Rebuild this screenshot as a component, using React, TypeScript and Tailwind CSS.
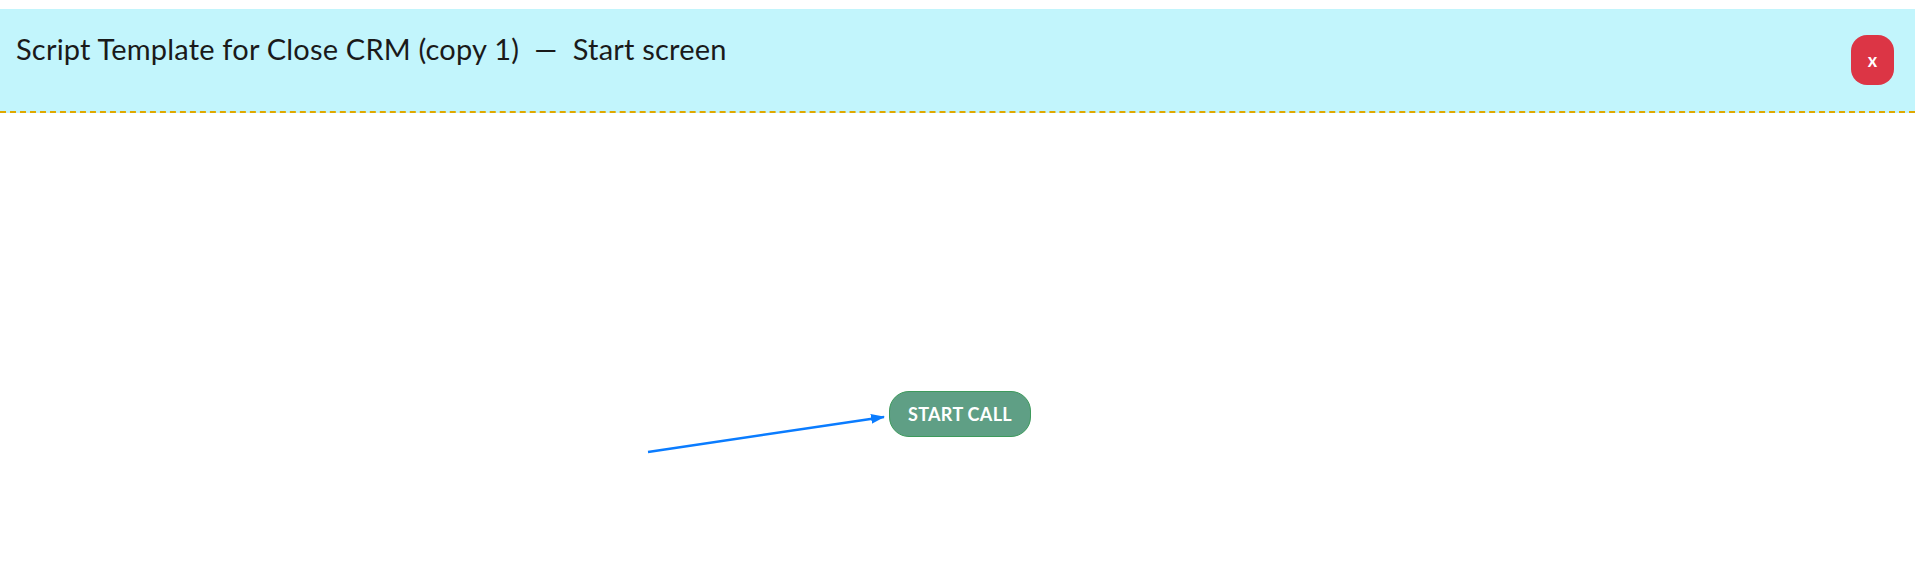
import React from 'react';

const App = () => {
  return (
    <div className="h-[566px] w-full bg-white pt-[9px] overflow-hidden" style={{ fontFamily: 'Lato, "Noto Sans", sans-serif' }}>
      {/* Header */}
      <header className="relative h-[104px] bg-[#c2f5fc] border-b-2 border-dashed border-[#e0a800] flex items-start justify-between pl-4 pr-[21px]">
        <h1 className="mt-[25px] text-[29px] leading-none text-[#1a1a1a] tracking-[0.2px]">
          Script Template for Close CRM (copy 1)&nbsp; —&nbsp; Start screen
        </h1>
        <button className="mt-[26px] w-[43px] h-[50px] rounded-[16px] bg-[#dc3545] text-white text-[18px] font-bold flex items-center justify-center">
          x
        </button>
      </header>

      {/* Canvas */}
      <div className="relative w-full h-[453px]">
        <svg className="absolute inset-0 w-full h-full" width="1915" height="453">
          <defs>
            <marker id="arrowhead" markerWidth="14" markerHeight="10" refX="13" refY="5" orient="auto" markerUnits="userSpaceOnUse">
              <path d="M0,0 L14,5 L0,10 Z" fill="#0a7cff" />
            </marker>
          </defs>
          <line x1="648" y1="339" x2="884" y2="304" stroke="#0a7cff" strokeWidth="2.5" markerEnd="url(#arrowhead)" />
        </svg>
        <div className="absolute left-[889px] top-[278px] w-[142px] h-[46px] rounded-[20px] bg-[#5f9f85] border border-[#3d9a5c] flex items-center justify-center">
          <span className="text-white font-bold text-[18px] tracking-[0.3px]">START CALL</span>
        </div>
      </div>
    </div>
  );
};

export default App;
